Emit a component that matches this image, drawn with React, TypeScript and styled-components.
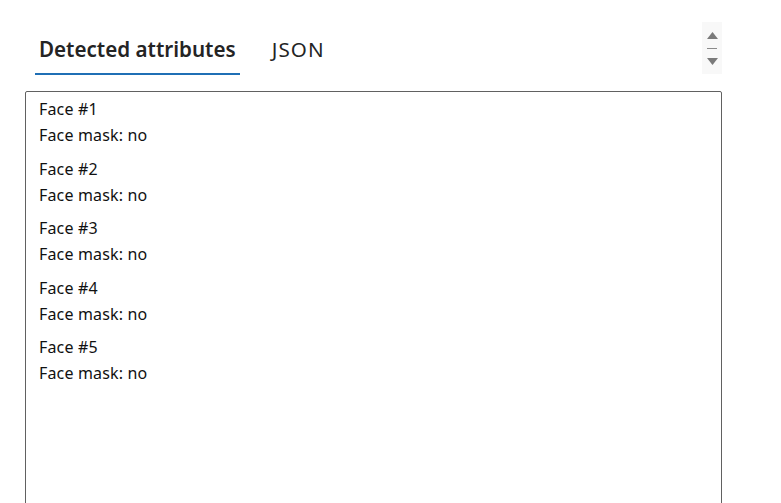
import React from "react";
import styled, { createGlobalStyle } from "styled-components";

const Global = createGlobalStyle`
  html, body { margin: 0; padding: 0; background: #ffffff; }
  body { font-family: "Segoe UI", "Noto Sans", "Open Sans", sans-serif; color: #242424; }
`;

const Page = styled.div`
  width: 697px;
  padding: 22px 0 0 25px;
`;

const Header = styled.div`
  display: flex;
  align-items: stretch;
  height: 53px;
`;

const TabList = styled.div`
  display: flex;
  align-items: flex-end;
  gap: 28px;
  padding-left: 10px;
`;

const Tab = styled.div<{ $active?: boolean }>`
  padding: 0 4px 10px;
  font-size: 20.6px;
  line-height: 28px;
  font-weight: ${(p) => (p.$active ? 600 : 400)};
  color: #242424;
  border-bottom: 2px solid ${(p) => (p.$active ? "#1f6fb5" : "transparent")};
  letter-spacing: ${(p) => (p.$active ? "0" : "1.1px")};
`;

const Scroller = styled.div`
  margin-left: auto;
  width: 20px;
  margin-bottom: 1px;
  background: #f8f8f8;
  display: flex;
  flex-direction: column;
  align-items: center;
  justify-content: center;
  gap: 9px;
`;

const Divider = styled.div`
  width: 10px;
  height: 1px;
  background: #8a8a8a;
`;

const Panel = styled.div`
  margin-top: 16px;
  height: 430px;
  border: 1px solid #616161;
  border-radius: 2px;
  padding: 4px 13px;
  font-size: 16px;
  line-height: 26px;
  letter-spacing: 0.15px;
  color: #111111;
`;

const Group = styled.div`
  margin-bottom: 7.5px;
`;

const Line = styled.div``;

const Arrow = ({ down }: { down?: boolean }) => (
  <svg width="11" height="7" viewBox="0 0 11 7" style={{ display: "block" }}>
    <path d={down ? "M0 0 L11 0 L5.5 7 Z" : "M5.5 0 L11 7 L0 7 Z"} fill="#7a7a7a" />
  </svg>
);

const faces = [1, 2, 3, 4, 5];

export default function App() {
  return (
    <>
      <Global />
      <Page>
        <Header>
          <TabList>
            <Tab $active>Detected attributes</Tab>
            <Tab>JSON</Tab>
          </TabList>
          <Scroller>
            <Arrow />
            <Divider />
            <Arrow down />
          </Scroller>
        </Header>
        <Panel>
          {faces.map((n) => (
            <Group key={n}>
              <Line>Face #{n}</Line>
              <Line>Face mask: no</Line>
            </Group>
          ))}
        </Panel>
      </Page>
    </>
  );
}
